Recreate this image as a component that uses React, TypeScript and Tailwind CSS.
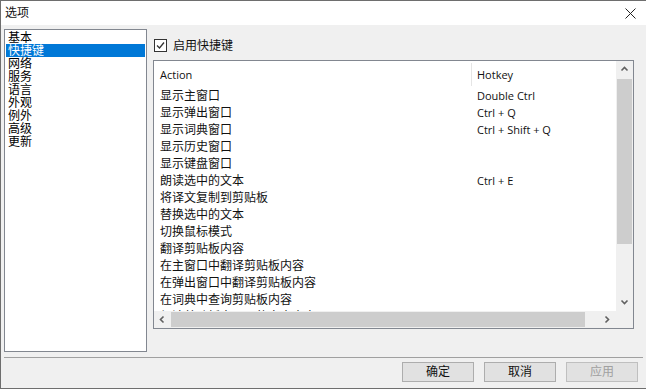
import React from 'react';

const navItems = ['基本', '快捷键', '网络', '服务', '语言', '外观', '例外', '高级', '更新'];

const shortcuts: { action: string; hotkey: string }[] = [
  { action: '显示主窗口', hotkey: 'Double Ctrl' },
  { action: '显示弹出窗口', hotkey: 'Ctrl + Q' },
  { action: '显示词典窗口', hotkey: 'Ctrl + Shift + Q' },
  { action: '显示历史窗口', hotkey: '' },
  { action: '显示键盘窗口', hotkey: '' },
  { action: '朗读选中的文本', hotkey: 'Ctrl + E' },
  { action: '将译文复制到剪贴板', hotkey: '' },
  { action: '替换选中的文本', hotkey: '' },
  { action: '切换鼠标模式', hotkey: '' },
  { action: '翻译剪贴板内容', hotkey: '' },
  { action: '在主窗口中翻译剪贴板内容', hotkey: '' },
  { action: '在弹出窗口中翻译剪贴板内容', hotkey: '' },
  { action: '在词典中查询剪贴板内容', hotkey: '' },
  { action: '朗读剪贴板中显示的文本内容', hotkey: '' },
];

const Chevron = ({ dir }: { dir: 'up' | 'down' | 'left' | 'right' }) => {
  const d = {
    up: 'M1.5 5.5 L4.5 2.5 L7.5 5.5',
    down: 'M1.5 2.5 L4.5 5.5 L7.5 2.5',
    left: 'M5.5 1.5 L2.5 4.5 L5.5 7.5',
    right: 'M2.5 1.5 L5.5 4.5 L2.5 7.5',
  }[dir];
  return (
    <svg width="9" height="9" viewBox="0 0 9 9">
      <path d={d} fill="none" stroke="#606060" strokeWidth="1.6" />
    </svg>
  );
};

const Button = ({ label, disabled = false }: { label: string; disabled?: boolean }) => (
  <div
    className={`w-[72px] h-[20px] flex items-center justify-center border text-[12px] leading-none ${
      disabled ? 'border-[#bfbfbf] bg-[#e1e1e1] text-[#a0a0a0]' : 'border-[#adadad] bg-[#e1e1e1] text-[#111]'
    }`}
  >
    {label}
  </div>
);

export default function App() {
  return (
    <div
      className="w-[646px] h-[389px] flex flex-col border-t border-l border-b border-[#6e6e6e] bg-[#f0f0f0] overflow-hidden text-[#111]"
      style={{ fontFamily: '"Open Sans", "Noto Sans CJK SC", sans-serif' }}
    >
      {/* title bar */}
      <div className="h-[24px] bg-white flex items-center justify-between pl-[4px] pr-[10px] shrink-0">
        <span className="text-[12px] leading-none">选项</span>
        <svg width="11" height="11" viewBox="0 0 11 11">
          <path d="M0.5 0.5 L10.5 10.5 M10.5 0.5 L0.5 10.5" stroke="#222" strokeWidth="1" />
        </svg>
      </div>

      {/* body */}
      <div className="flex pt-[4px] pl-[3px]">
        {/* category list */}
        <div className="w-[143px] h-[323px] border border-[#828790] bg-white pt-[1px] px-[1px] shrink-0">
          {navItems.map((item, i) => (
            <div
              key={item}
              className={`h-[13px] pl-[2px] text-[12px] leading-[13px] ${i === 1 ? 'bg-[#0078d7] text-white' : 'text-black'}`}
            >
              {item}
            </div>
          ))}
        </div>

        {/* shortcuts panel */}
        <div className="ml-[6px] flex flex-col">
          <div className="h-[31px] flex items-center gap-[6px] pl-[1px] pt-[2px]">
            <div className="w-[13px] h-[13px] border border-[#333] bg-white flex items-center justify-center">
              <svg width="11" height="11" viewBox="0 0 11 11">
                <path d="M2 5.5 L4.5 8 L9 2.5" fill="none" stroke="#333" strokeWidth="1.3" />
              </svg>
            </div>
            <span className="text-[12px] leading-none">启用快捷键</span>
          </div>

          <div className="w-[481px] h-[269px] border border-[#828790] bg-white grid grid-cols-[1fr_17px] grid-rows-[1fr_17px]">
            {/* list content */}
            <div className="overflow-hidden">
              <div className="h-[26px] flex items-center">
                <div className="w-[317px] pl-[6px] text-[11px] leading-none">Action</div>
                <div className="h-[23px] border-l border-[#e5e5e5] flex items-center pl-[5px] text-[11px] leading-none">
                  Hotkey
                </div>
              </div>
              {shortcuts.map((s) => (
                <div key={s.action} className="h-[17px] flex items-center">
                  <div className="w-[317px] pl-[6px] text-[12px] leading-[17px] whitespace-nowrap">{s.action}</div>
                  <div className="pl-[6px] text-[11px] leading-[17px] whitespace-nowrap">{s.hotkey}</div>
                </div>
              ))}
            </div>

            {/* vertical scrollbar */}
            <div className="bg-[#f0f0f0] flex flex-col">
              <div className="h-[17px] flex items-center justify-center">
                <Chevron dir="up" />
              </div>
              <div className="flex-1 flex flex-col">
                <div className="h-[1px]" />
                <div className="mx-[1px] h-[165px] bg-[#cdcdcd]" />
              </div>
              <div className="h-[17px] flex items-center justify-center">
                <Chevron dir="down" />
              </div>
            </div>

            {/* horizontal scrollbar */}
            <div className="bg-[#f0f0f0] flex">
              <div className="w-[17px] flex items-center justify-center">
                <Chevron dir="left" />
              </div>
              <div className="flex-1 flex items-center">
                <div className="w-[414px] h-[15px] bg-[#cdcdcd]" />
              </div>
              <div className="w-[17px] flex items-center justify-center">
                <Chevron dir="right" />
              </div>
            </div>
            <div className="bg-[#f0f0f0]" />
          </div>
        </div>
      </div>

      {/* footer */}
      <div className="mt-[5px] mx-[3px] border-t border-[#a0a0a0]" />
      <div className="flex justify-end gap-[10px] pt-[4px] pr-[8px]">
        <Button label="确定" />
        <Button label="取消" />
        <Button label="应用" disabled />
      </div>
    </div>
  );
}
